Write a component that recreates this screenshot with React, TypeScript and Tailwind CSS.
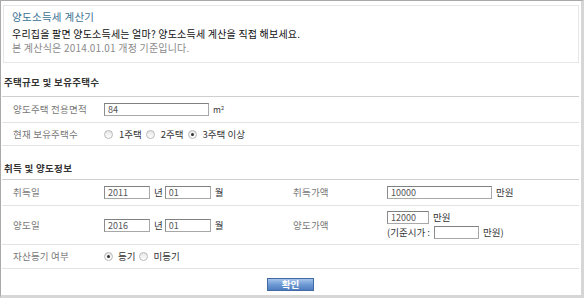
import type { ReactNode } from "react";

function Radio({ checked }: { checked?: boolean }) {
  return (
    <span className="flex h-[9px] w-[9px] shrink-0 items-center justify-center rounded-full border border-[#b9b9b9] bg-linear-to-b from-[#e6e6e6] to-white">
      {checked && <span className="h-[3px] w-[3px] rounded-full bg-[#333]" />}
    </span>
  );
}

function Field({ value = "", w }: { value?: string; w: string }) {
  return (
    <input
      readOnly
      value={value}
      className={`h-[13px] ${w} border border-[#a8a8a8] border-t-[#808080] border-l-[#8c8c8c] bg-white pl-[3px] text-[9px] leading-[11px] text-[#555] outline-none`}
    />
  );
}

function Row({ h, label, children }: { h: string; label: string; children: ReactNode }) {
  return (
    <div className={`flex ${h} items-center border-b border-[#e3e3e3]`}>
      <div className="w-[102px] shrink-0 pl-[11px] tracking-[0.2px] text-[#777]">{label}</div>
      <div className="flex items-center">{children}</div>
    </div>
  );
}

export default function App() {
  return (
    <div className="h-[298px] w-[584px] border-t border-l border-[#a9a9a9] border-r-[3px] border-b-[3px] border-r-[#d6d6d6] border-b-[#d6d6d6] bg-white font-['Noto_Sans_CJK_KR','Noto_Sans',sans-serif] text-[9.5px] leading-[13px] text-[#222]">
      <div className="pl-[1px] pr-[2px] pt-[4px]">
        {/* 안내 박스 */}
        <div className="ml-[1px] h-[58px] border border-[#e6e6e6] pl-[8px] pt-[4px]">
          <h1 className="text-[10.5px] leading-[14px] tracking-[0.3px] text-[#3a7192]">양도소득세 계산기</h1>
          <div className="mt-[3px] text-[10px] leading-[14px] tracking-[0.2px]">
            <p className="text-[#111]">우리집을 팔면 양도소득세는 얼마? 양도소득세 계산을 직접 해보세요.</p>
            <p className="text-[#8a8a8a]">본 계산식은 2014.01.01 개정 기준입니다.</p>
          </div>
        </div>

        {/* 주택규모 */}
        <div className="flex h-[33px] items-end pb-[8px] pl-[2px]">
          <h2 className="font-bold leading-[12px] tracking-[0.3px] text-[#333]">주택규모 및 보유주택수</h2>
        </div>
        <div className="border-t border-[#cfcfcf]">
          <Row h="h-[26px]" label="양도주택 전용면적">
            <Field value="84" w="w-[105px]" />
            <span className="ml-[4px] text-[8.5px] text-[#333]">
              m<sup className="text-[5.5px]">2</sup>
            </span>
          </Row>
          <Row h="h-[23px]" label="현재 보유주택수">
            <Radio />
            <span className="ml-[6px] text-[#333]">1주택</span>
            <span className="ml-[4px]"><Radio /></span>
            <span className="ml-[6px] text-[#333]">2주택</span>
            <span className="ml-[4px]"><Radio checked /></span>
            <span className="ml-[6px] text-[#333]">3주택 이상</span>
          </Row>
        </div>

        {/* 취득 및 양도 */}
        <div className="flex h-[33px] items-end pb-[5px] pl-[2px]">
          <h2 className="font-bold leading-[12px] tracking-[0.3px] text-[#333]">취득 및 양도정보</h2>
        </div>
        <div className="border-t border-[#cfcfcf]">
          <div className="flex h-[26px] items-center border-b border-[#e3e3e3]">
            <div className="w-[102px] shrink-0 pl-[11px] tracking-[0.2px] text-[#777]">취득일</div>
            <div className="flex w-[189px] shrink-0 items-center">
              <Field value="2011" w="w-[46px]" />
              <span className="ml-[4px] text-[#333]">년</span>
              <span className="ml-[2px]"><Field value="01" w="w-[46px]" /></span>
              <span className="ml-[4px] text-[#333]">월</span>
            </div>
            <div className="w-[94px] shrink-0 tracking-[0.2px] text-[#777]">취득가액</div>
            <div className="flex items-center">
              <Field value="10000" w="w-[105px]" />
              <span className="ml-[4px] text-[#333]">만원</span>
            </div>
          </div>
          <div className="flex h-[39px] items-center border-b border-[#e3e3e3]">
            <div className="w-[102px] shrink-0 pl-[11px] tracking-[0.2px] text-[#777]">양도일</div>
            <div className="flex w-[189px] shrink-0 items-center">
              <Field value="2016" w="w-[46px]" />
              <span className="ml-[4px] text-[#333]">년</span>
              <span className="ml-[2px]"><Field value="01" w="w-[46px]" /></span>
              <span className="ml-[4px] text-[#333]">월</span>
            </div>
            <div className="w-[94px] shrink-0 tracking-[0.2px] text-[#777]">양도가액</div>
            <div className="flex flex-col gap-[2px]">
              <div className="flex items-center">
                <Field value="12000" w="w-[42px]" />
                <span className="ml-[4px] text-[#333]">만원</span>
              </div>
              <div className="flex items-center">
                <span className="text-[#333]">(기준시가 :</span>
                <span className="ml-[4px]"><Field w="w-[45px]" /></span>
                <span className="ml-[4px] text-[#333]">만원)</span>
              </div>
            </div>
          </div>
          <Row h="h-[24px]" label="자산등기 여부">
            <Radio checked />
            <span className="ml-[5px] text-[#333]">등기</span>
            <span className="ml-[4px]"><Radio /></span>
            <span className="ml-[5px] text-[#333]">미등기</span>
          </Row>
        </div>

        <div className="mt-[9px] flex justify-center">
          <button className="h-[13px] w-[47px] border border-[#3f6aa3] bg-linear-to-b from-[#a6c4ea] via-[#6f9ad4] to-[#4f7dc0] text-[9.5px] leading-[11px] font-bold text-white">
            확인
          </button>
        </div>
      </div>
    </div>
  );
}
